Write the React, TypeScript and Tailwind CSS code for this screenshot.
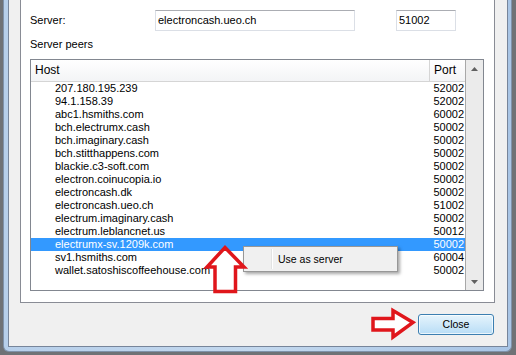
import React from "react"

const peers: [string, string][] = [
  ["207.180.195.239", "52002"],
  ["94.1.158.39", "52002"],
  ["abc1.hsmiths.com", "60002"],
  ["bch.electrumx.cash", "50002"],
  ["bch.imaginary.cash", "50002"],
  ["bch.stitthappens.com", "50002"],
  ["blackie.c3-soft.com", "50002"],
  ["electron.coinucopia.io", "50002"],
  ["electroncash.dk", "50002"],
  ["electroncash.ueo.ch", "51002"],
  ["electrum.imaginary.cash", "50002"],
  ["electrum.leblancnet.us", "50012"],
  ["electrumx-sv.1209k.com", "50002"],
  ["sv1.hsmiths.com", "60004"],
  ["wallet.satoshiscoffeehouse.com", "50002"],
]

const SELECTED = 12

function Triangle({ up }: { up?: boolean }) {
  return (
    <svg width="7" height="4" viewBox="0 0 7 4">
      <polygon points={up ? "3.5,0 7,4 0,4" : "0,0 7,0 3.5,4"} fill="#606060" />
    </svg>
  )
}

export default function App() {
  return (
    <div className="relative w-[516px] h-[355px] overflow-hidden bg-[#6f7276] font-['Liberation_Sans',Arial,sans-serif] text-black">
      {/* window frame */}
      <div className="ml-[3px] w-[509px] h-[352px] rounded-b-[6px] border-x border-b border-[#7f92aa] bg-gradient-to-r from-[#b7cfea] via-[#c3d8ee] to-[#a9c5e5] pl-[4px] pr-[3px] pb-[4px]">
        <div className="h-full border-x border-b border-[#77859a] bg-[#f0f0f0] pl-[11px]">
          {/* tab pane */}
          <div className="w-[475px] h-[303px] bg-white border-x border-b border-[#898c95] pl-[9px] pt-[10px]">
            <div className="flex items-center h-[21px] text-[11px]">
              <span className="w-[125px]">Server:</span>
              <div className="w-[200px] h-[21px] border border-[#dbdfe6] border-t-[#abadb3] bg-white pl-[2px] leading-[19px] text-[11px]">
                electroncash.ueo.ch
              </div>
              <div className="ml-[41px] w-[60px] h-[21px] border border-[#dbdfe6] border-t-[#abadb3] bg-white pl-[2px] leading-[19px] text-[11px]">
                51002
              </div>
            </div>
            <p className="mt-[7px] leading-[13px] text-[11px]">Server peers</p>

            {/* tree widget */}
            <div className="mt-[8px] w-[454px] h-[232px] border border-[#828790] bg-white flex">
              <div className="w-[434px]">
                <div className="flex h-[22px] border-b border-[#d5d5d5] bg-gradient-to-b from-white to-[#f3f4f6] text-[12px] leading-[21px]">
                  <div className="w-[398px] pl-[4px]">Host</div>
                  <div className="w-[36px] border-l border-[#d5d5d5] pl-[4px]">Port</div>
                </div>
                {peers.map(([host, port], i) => (
                  <div
                    key={host}
                    className={`flex h-[13px] leading-[13px] text-[11px] ${
                      i === SELECTED ? "bg-[#3399ff] text-white" : ""
                    }`}
                  >
                    <div className="w-[398px] pl-[24px] whitespace-nowrap">{host}</div>
                    <div className="w-[36px] text-right pr-[1px]">{port}</div>
                  </div>
                ))}
              </div>
              {/* scrollbar */}
              <div className="w-[18px] border-l border-[#a8a8a8] bg-[#ebebeb] flex flex-col items-center justify-between pt-[7px] pb-[6px]">
                <Triangle up />
                <Triangle />
              </div>
            </div>
          </div>

          <div className="mt-[11px] flex justify-end pr-[13px]">
            <button className="w-[76px] h-[21px] rounded-[3px] border border-[#3c7fb1] bg-gradient-to-b from-[#e6f4fc] to-[#b8ddf6] shadow-[inset_0_0_0_1px_rgba(255,255,255,0.7)] text-[10.5px] leading-[19px]">
              Close
            </button>
          </div>
        </div>
      </div>

      {/* context menu */}
      <div className="absolute left-[243px] top-[246px] w-[155px] h-[26px] border border-[#979797] bg-[#f0f0f0] shadow-[2px_2px_3px_rgba(0,0,0,0.35)]">
        <div className="absolute left-[27px] top-[2px] bottom-[2px] w-[2px] border-l border-[#e2e3e3] border-r border-r-white" />
        <span className="absolute left-[34px] top-[6px] text-[10.5px] leading-[12px]">Use as server</span>
      </div>

      {/* red arrows */}
      <svg className="absolute left-0 top-0 pointer-events-none" width="516" height="355" viewBox="0 0 516 355">
        <polygon
          points="225,247.5 244,267 235.5,267 235.5,291.5 215,291.5 215,267 207,267"
          fill="white"
          stroke="#e0161b"
          strokeWidth="3.5"
        />
        <polygon
          points="373,318.5 393,318.5 393,310.5 413,322.5 393,337 393,330 373,330"
          fill="white"
          stroke="#e0161b"
          strokeWidth="3.5"
        />
      </svg>
    </div>
  )
}
